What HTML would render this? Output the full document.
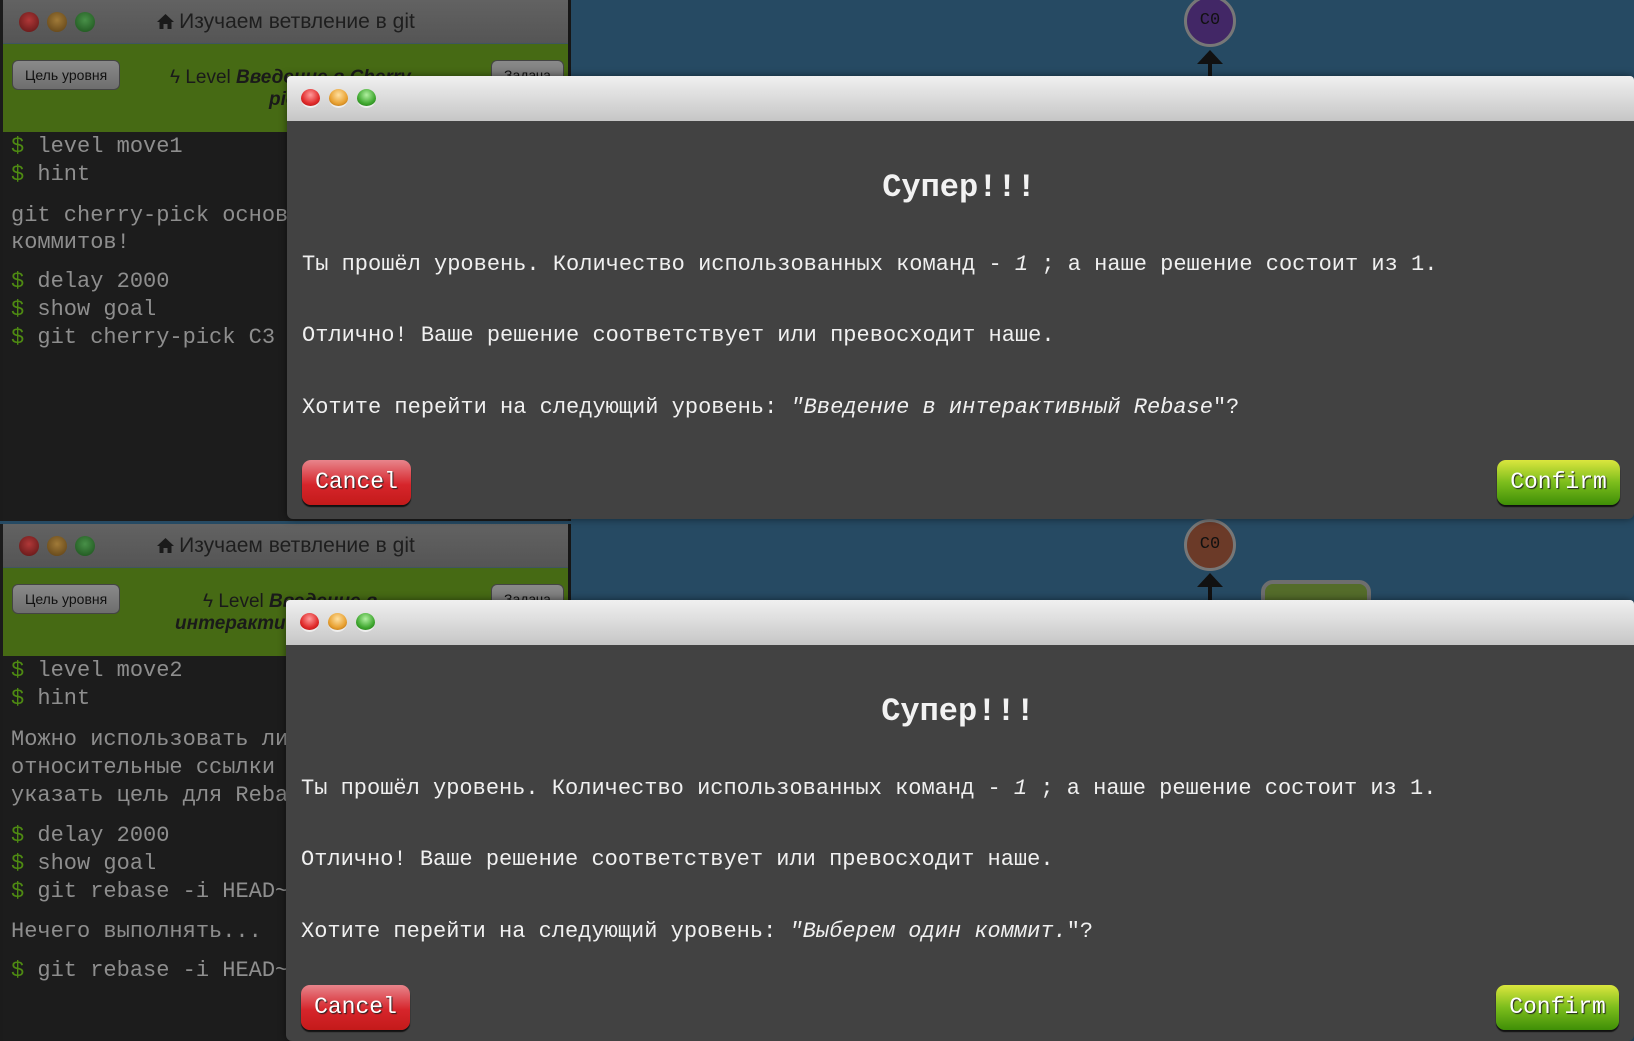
<!DOCTYPE html>
<html><head><meta charset="utf-8"><style>
*{margin:0;padding:0;box-sizing:border-box}
body{width:1634px;height:1041px;overflow:hidden;background:#264a63;position:relative;font-family:"Liberation Sans",sans-serif}
.panel{position:absolute;left:0;width:571px;background:#1b1b1b;border-right:3px solid #161616}
.tb{position:absolute;left:3px;right:0;top:0;height:44px;background:linear-gradient(#626262,#555);border-bottom:1px solid #3f5560}
.tb .t{position:absolute;left:0;right:0;top:10px;text-align:center;color:#1e1e1e;font-size:21px}
.tb svg{vertical-align:-2px;margin-right:4px}
.dot{position:absolute;width:20px;height:20px;border-radius:50%;top:12px}
.green{position:absolute;left:3px;right:0;top:44px;height:88px;background:#466a14}
.btn{position:absolute;top:16px;height:30px;border:1px solid #444;border-radius:6px;background:linear-gradient(#8a8a8a,#6e6e6e);font-size:14px;color:#111;padding:6px 12px}
.lvl{position:absolute;top:22px;font-size:19px;color:#1a1a1a;line-height:24px}
.term{position:absolute;left:3px;right:0;top:132px;bottom:0;background:#1c1c1c;font-family:"Liberation Mono",monospace;font-size:22px;color:#8e8e8e}
.term div{position:absolute;left:8px;white-space:nowrap}
.term b{color:#4e8a12;font-weight:normal}
.dlg{position:absolute;left:287px;width:1347px;background:#424242;border-radius:0 6px 6px 6px;box-shadow:0 0 8px rgba(0,0,0,.5)}
.dtb{height:45px;background:linear-gradient(#f0f0f0,#c6c6c6);border-radius:4px 4px 0 0;position:relative}
.ddot{position:absolute;width:19px;height:19px;border-radius:50%;top:13px;border-bottom:2px solid #eee}
.h{position:absolute;left:0;width:1344px;text-align:center;font-family:"Liberation Mono",monospace;font-weight:bold;font-size:32px;color:#f2f2f2}
.p{position:absolute;left:15px;white-space:nowrap;font-family:"Liberation Mono",monospace;font-size:22px;color:#f0f0f0}
.cancel,.confirm{position:absolute;height:45px;border-radius:9px;font-family:"Liberation Mono",monospace;font-size:23px;color:#fff;text-align:center;line-height:45px;text-shadow:1px 1px 1px #222;box-shadow:0 2px 1px #111}
.cancel{left:15px;width:109px;background:linear-gradient(#e8858c,#d6252b 55%,#c41a1a)}
.confirm{left:1210px;width:123px;background:linear-gradient(#dbe63e,#7cbd1c 50%,#3f8f07)}
.c0{position:absolute;width:52px;height:52px;border-radius:50%;border:3px solid #777;font-family:"Liberation Mono",monospace;font-size:17px;text-align:center;line-height:46px;color:#111}
.arr{position:absolute;width:0;height:0;border-left:13px solid transparent;border-right:13px solid transparent;border-bottom:14px solid #111}
.stem{position:absolute;width:4px;background:#111}
</style></head><body>

<div class="c0" style="left:1184px;top:-5px;background:#422766">C0</div>
<div class="arr" style="left:1197px;top:50px"></div><div class="stem" style="left:1208px;top:62px;height:14px"></div>
<div class="c0" style="left:1184px;top:519px;background:#6b3a28">C0</div>
<div class="arr" style="left:1197px;top:573px"></div><div class="stem" style="left:1208px;top:585px;height:15px"></div>
<div style="position:absolute;left:1261px;top:580px;width:110px;height:40px;border-radius:12px;border:4px solid #6e6e6e;background:#546c2a"></div>

<div class="panel" style="top:0;height:521px">
 <div class="tb"><div class="dot" style="left:16px;background:radial-gradient(circle at 50% 40%,#b03838,#5a1414)"></div><div class="dot" style="left:44px;background:radial-gradient(circle at 50% 40%,#a07a38,#5a3e14)"></div><div class="dot" style="left:72px;background:radial-gradient(circle at 50% 40%,#489048,#1a4e1a)"></div><div class="t"><svg width="19" height="17" viewBox="0 0 19 17"><path d="M9.5 1 L1 9 L3.5 9 L3.5 16 L7.5 16 L7.5 11 L11.5 11 L11.5 16 L15.5 16 L15.5 9 L18 9 Z" fill="#1a1a1a"/></svg>Изучаем ветвление в git</div></div>
 <div class="green"><div class="btn" style="left:9px">Цель уровня</div><div class="btn" style="left:488px">Задача</div>
 <div class="lvl" style="left:167px">ϟ Level <b><i>Введение в Cherry-</i></b></div><div class="lvl" style="left:266px;top:44px"><b><i>pick</i></b></div></div>
 <div class="term">
  <div style="top:2px"><b>$</b> level move1</div><div style="top:30px"><b>$</b> hint</div>
  <div style="top:71px">git cherry-pick основ</div><div style="top:98px">коммитов!</div>
  <div style="top:137px"><b>$</b> delay 2000</div><div style="top:165px"><b>$</b> show goal</div><div style="top:193px"><b>$</b> git cherry-pick C3</div>
 </div>
</div>

<div class="panel" style="top:524px;height:517px">
 <div class="tb"><div class="dot" style="left:16px;background:radial-gradient(circle at 50% 40%,#b03838,#5a1414)"></div><div class="dot" style="left:44px;background:radial-gradient(circle at 50% 40%,#a07a38,#5a3e14)"></div><div class="dot" style="left:72px;background:radial-gradient(circle at 50% 40%,#489048,#1a4e1a)"></div><div class="t"><svg width="19" height="17" viewBox="0 0 19 17"><path d="M9.5 1 L1 9 L3.5 9 L3.5 16 L7.5 16 L7.5 11 L11.5 11 L11.5 16 L15.5 16 L15.5 9 L18 9 Z" fill="#1a1a1a"/></svg>Изучаем ветвление в git</div></div>
 <div class="green"><div class="btn" style="left:9px">Цель уровня</div><div class="btn" style="left:488px">Задача</div>
 <div class="lvl" style="left:200px">ϟ Level <b><i>Введение в</i></b></div><div class="lvl" style="left:172px;top:44px"><b><i>интерактивный</i></b></div></div>
 <div class="term">
  <div style="top:2px"><b>$</b> level move2</div><div style="top:30px"><b>$</b> hint</div>
  <div style="top:71px">Можно использовать ли</div><div style="top:99px">относительные ссылки</div><div style="top:127px">указать цель для Reba</div>
  <div style="top:167px"><b>$</b> delay 2000</div><div style="top:195px"><b>$</b> show goal</div><div style="top:223px"><b>$</b> git rebase -i HEAD~</div>
  <div style="top:263px">Нечего выполнять...</div>
  <div style="top:302px"><b>$</b> git rebase -i HEAD~</div>
 </div>
</div>

<div class="dlg" style="top:76px;height:443px">
 <div class="dtb"><div class="ddot" style="left:14px;background:radial-gradient(circle at 50% 35%,#ff9a9a,#e02a2a 60%,#a01010)"></div><div class="ddot" style="left:42px;background:radial-gradient(circle at 50% 35%,#ffe0a0,#e8a030 60%,#a06010)"></div><div class="ddot" style="left:70px;background:radial-gradient(circle at 50% 35%,#b0f0a0,#40a830 60%,#1a6a10)"></div></div>
 <div class="h" style="top:93px">Супер!!!</div>
 <div class="p" style="top:176px">Ты прошёл уровень. Количество использованных команд - <i>1</i> ; а наше решение состоит из 1.</div>
 <div class="p" style="top:247px">Отлично! Ваше решение соответствует или превосходит наше.</div>
 <div class="p" style="top:319px">Хотите перейти на следующий уровень: <i>"Введение в интерактивный Rebase</i>"?</div>
 <div class="cancel" style="top:384px">Cancel</div>
 <div class="confirm" style="top:384px">Confirm</div>
</div>

<div class="dlg" style="top:600px;height:441px;left:286px;width:1348px">
 <div class="dtb"><div class="ddot" style="left:14px;background:radial-gradient(circle at 50% 35%,#ff9a9a,#e02a2a 60%,#a01010)"></div><div class="ddot" style="left:42px;background:radial-gradient(circle at 50% 35%,#ffe0a0,#e8a030 60%,#a06010)"></div><div class="ddot" style="left:70px;background:radial-gradient(circle at 50% 35%,#b0f0a0,#40a830 60%,#1a6a10)"></div></div>
 <div class="h" style="top:93px">Супер!!!</div>
 <div class="p" style="top:176px">Ты прошёл уровень. Количество использованных команд - <i>1</i> ; а наше решение состоит из 1.</div>
 <div class="p" style="top:247px">Отлично! Ваше решение соответствует или превосходит наше.</div>
 <div class="p" style="top:319px">Хотите перейти на следующий уровень: <i>"Выберем один коммит.</i>"?</div>
 <div class="cancel" style="top:385px">Cancel</div>
 <div class="confirm" style="top:385px">Confirm</div>
</div>
</body></html>
